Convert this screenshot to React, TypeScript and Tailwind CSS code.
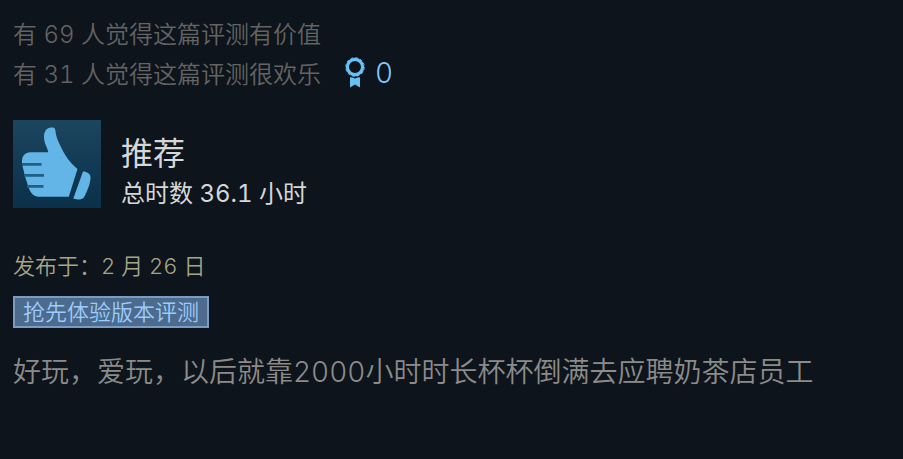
import React from 'react';

const review = {
  helpful: '有 69 人觉得这篇评测有价值',
  funny: '有 31 人觉得这篇评测很欢乐',
  awards: 0,
  rating: '推荐',
  hours: '总时数 36.1 小时',
  posted: '发布于：2 月 26 日',
  tag: '抢先体验版本评测',
  content: '好玩，爱玩，以后就靠2000小时时长杯杯倒满去应聘奶茶店员工',
};

const AwardIcon: React.FC = () => (
  <svg className="h-8 w-5" viewBox="0 0 20 32" fill="none" aria-hidden="true">
    <circle cx="10" cy="10" r="7.6" stroke="#67c1f5" strokeWidth="3.2" />
    <circle cx="10" cy="10" r="9.3" stroke="#67c1f5" strokeWidth="0.9" strokeDasharray="3 1.869" />
    <path d="M5 20.2 Q7.5 20.2 8.4 20.8 Q10 22 11.6 20.8 Q12.5 20.2 15 20.2 V30.5 L10 27.4 L5 30.5 Z" fill="#67c1f5" />
  </svg>
);

const ThumbIcon: React.FC = () => (
  <svg className="size-full" viewBox="0 0 88 88" aria-hidden="true">
    <path
      d="M31 17 C31 11 34 7.5 38 7.5 C41 7.5 42 8 42.3 10 C43 16 44.5 20 47 25 C51 34 57 43 64.5 49 L55.8 76.7 H25.5 C21 76.7 17.5 73 15.8 68 L12.5 58 L9.5 46 C8 39 9.5 32.3 18 32.3 H35.3 C34.5 27 31 24 31 17 Z"
      fill="#62b5e6"
    />
    <path d="M70 51.5 C74 51.5 77.5 54 77.5 57.5 C77.5 63 74.5 70 72 75.5 C70 79.5 67 80.5 60.3 78.5 Z" fill="#62b5e6" />
    {/* Gaps between the fingers */}
    <path d="M9 44.3 H28.5 M11 55.3 H31 M14 66.3 H30.5" stroke="#215f85" strokeWidth="2.8" fill="none" />
  </svg>
);

const App: React.FC = () => {
  return (
    <main className="min-h-screen bg-[#0d141b] px-[13px] pt-[15px] font-['Inter','Noto_Sans_CJK_SC',sans-serif] tabular-nums">
      {/* Votes */}
      <div className="text-2xl/10 font-[350] text-[#636363]">
        <p>{review.helpful}</p>
        <div className="flex items-start">
          <p>{review.funny}</p>
          <div className="ml-6 flex items-center gap-2.5 text-[28px]/9 text-[#7cc8fb]">
            <AwardIcon />
            <span>{review.awards}</span>
          </div>
        </div>
      </div>

      {/* Rating */}
      <div className="mt-[25px] flex gap-5">
        <div className="size-22 shrink-0 bg-linear-to-b from-[#1c455e] to-[#0a304a]">
          <ThumbIcon />
        </div>
        <div className="pt-3.5 text-[#d6d7d8]">
          <h1 className="text-[32px]/10">{review.rating}</h1>
          <p className="text-2xl/10">{review.hours}</p>
        </div>
      </div>

      {/* Review */}
      <p className="mt-8 text-[22px]/10 font-[350] text-[#a5a588]">{review.posted}</p>
      <span className="mt-2.5 block w-fit border-2 border-[#7a9cc2] bg-[#4d6b8c] px-2 text-[22px]/7 font-[350] text-[#9bcbff]">
        {review.tag}
      </span>
      <p className="mt-6 text-[28px]/10 font-[350] text-[#8c8b89]">{review.content}</p>
    </main>
  );
};

export default App;
